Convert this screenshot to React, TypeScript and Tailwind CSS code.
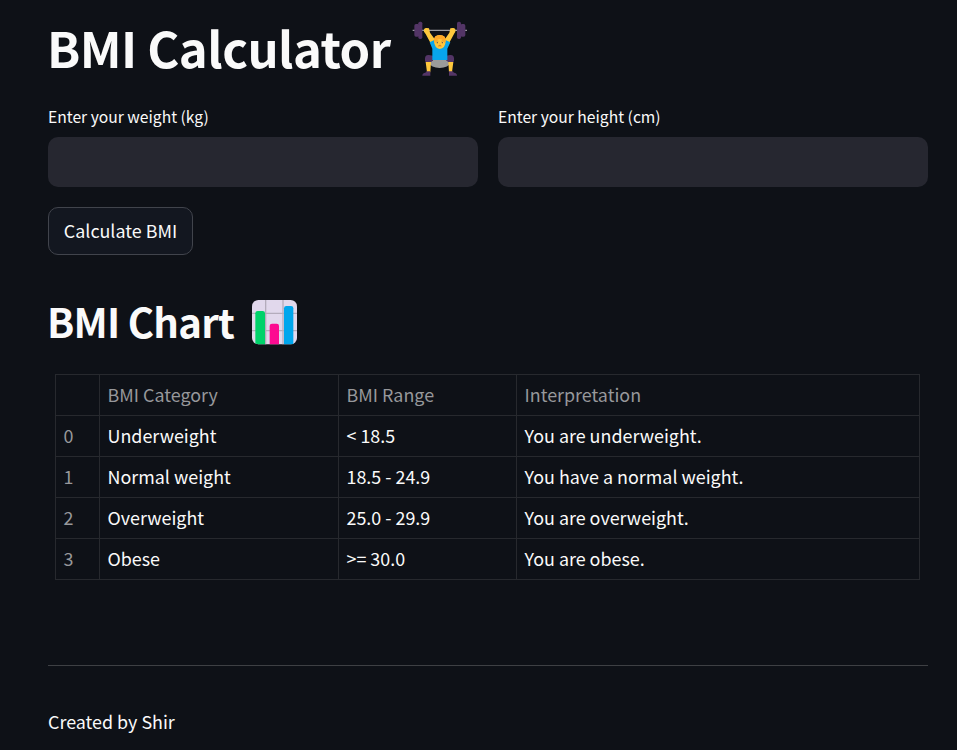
import type { ReactNode } from "react";

const rows = [
  ["Underweight", "< 18.5", "You are underweight."],
  ["Normal weight", "18.5 - 24.9", "You have a normal weight."],
  ["Overweight", "25.0 - 29.9", "You are overweight."],
  ["Obese", ">= 30.0", "You are obese."],
];

function WeightLifter() {
  return (
    <svg className="h-14 w-14 shrink-0" viewBox="36 33 168 168" aria-hidden="true">
      <path d="M38 61H201" stroke="#9b9b9f" strokeWidth="4" />
      <g fill="#533566">
        <rect x="55" y="35" width="12" height="52" rx="5" />
        <rect x="43" y="42" width="15" height="38" rx="5" />
        <rect x="171" y="35" width="12" height="52" rx="5" />
        <rect x="181" y="42" width="15" height="38" rx="5" />
      </g>
      <ellipse cx="119" cy="159" rx="30" ry="15" fill="#9b9b9b" />
      <path d="M75 151 Q73 134 87 135 L99 137 L99 151 L93 157 L77 157Z" fill="#533566" />
      <path d="M162 151 Q164 134 150 135 L139 137 L139 151 L145 157 L160 157Z" fill="#533566" />
      <path d="M77 156H93L91 187H81Z M145 156H160L156 187H147Z" fill="#ffc83d" />
      <path d="M80 184H91V197H67Q67 189 76 188Z M147 184H158L162 188Q171 189 171 197H147Z" fill="#533566" />
      <path d="M72 65 Q70 53 80 54 L87 55 L90 68 L106 90 L92 100 L77 72Z" fill="#ffc83d" />
      <path d="M166 65 Q168 53 158 54 L151 55 L148 68 L133 90 L147 100 L162 72Z" fill="#ffc83d" />
      <path d="M103 90 L89 97 L97 116 L97 150 H142 V116 L151 97 L136 90Z" fill="#08a5ec" />
      <path d="M102 94 Q101 75 119 75 Q138 75 137 94 Q136 116 119 117 Q104 116 102 94Z" fill="#ffc83d" />
      <path d="M102 94 Q101 75 119 75 Q138 75 137 94 L133 100 Q133 89 119 87 Q106 89 106 100Z" fill="#ffa928" />
      <path d="M108 94Q111 91 115 94M124 94Q128 91 131 94" fill="none" stroke="#d48728" strokeWidth="2" />
      <circle cx="112" cy="98" r="2" fill="#634c50" />
      <circle cx="127" cy="98" r="2" fill="#634c50" />
      <path d="M118 102H122" stroke="#f59b23" strokeWidth="2" />
      <path d="M115 108Q120 106 124 108" fill="none" stroke="#d67018" strokeWidth="3" />
    </svg>
  );
}

function BarChart() {
  return (
    <svg className="h-[45px] w-[45px] shrink-0" viewBox="0 0 135 135" aria-hidden="true">
      <clipPath id="tile">
        <rect width="135" height="133" rx="19" />
      </clipPath>
      <g clipPath="url(#tile)">
        <rect width="135" height="135" fill="#e1d8ec" />
        <path d="M0 40H135M0 92H135M41 0V135M93 0V135" stroke="#b4acbc" strokeWidth="4" />
        <path d="M10 135V40Q10 33 17 33H32Q39 33 39 40V135Z" fill="#00d26a" />
        <path d="M53 135V78Q53 71 60 71H74Q81 71 81 78V135Z" fill="#fc0b91" />
        <path d="M96 135V25Q96 18 103 18H117Q124 18 124 25V135Z" fill="#00a6ed" />
      </g>
    </svg>
  );
}

function Field({ label, id }: { label: string; id: string }) {
  return (
    <div className="flex flex-1 flex-col">
      <label htmlFor={id} className="h-[31px] text-[15.67px] leading-[22px]">
        <span>{label}</span>
      </label>
      <input id={id} className="h-[50px] w-full rounded-[10px] bg-[#262730] px-3 outline-none" />
    </div>
  );
}

function Cell({ children, muted }: { children?: ReactNode; muted?: boolean }) {
  return (
    <td className={`border border-[#27292e] p-0 pb-0.5 pl-[7.5px] ${muted ? "text-[#97989b]" : "text-[#fafafa]"}`}>
      {children}
    </td>
  );
}

export default function App() {
  return (
    <main className="h-[750px] w-full overflow-hidden bg-[#0e1117] pl-12 pr-[29px] pt-[14px] font-['Noto_Sans_CJK_SC','Source_Sans_Pro',sans-serif] text-[17.9px] text-[#fafafa]">
      <h1 className="flex h-[92px] items-start text-[49px] font-bold leading-[66px] tracking-[-0.55px]">
        <span className="-ml-px w-[365px] whitespace-nowrap">BMI Calculator</span>
        <span className="pt-[7px]"><WeightLifter /></span>
      </h1>
      <form className="flex flex-col items-start gap-5" onSubmit={(e) => e.preventDefault()}>
        <div className="flex w-full gap-5">
          <Field id="weight" label="Enter your weight (kg)" />
          <Field id="height" label="Enter your height (cm)" />
        </div>
        <button className="h-12 w-[145px] rounded-[10px] border border-[#41444c] bg-[#131720] pb-0.5 leading-[30px]">
          Calculate BMI
        </button>
      </form>
      <h2 className="mt-[41px] flex h-[78px] items-start text-[40.1px] font-bold leading-[49px] tracking-[-0.75px]">
        <span className="-ml-px w-[205px] whitespace-nowrap">BMI Chart</span>
        <span className="pt-1"><BarChart /></span>
      </h2>
      <table className="ml-[7px] w-[865px] table-fixed border-collapse text-left leading-[30px]">
        <colgroup>
          <col className="w-[44px]" />
          <col className="w-[239px]" />
          <col className="w-[178px]" />
          <col />
        </colgroup>
        <tbody>
          <tr className="h-[41px]">
            <Cell />
            <Cell muted>BMI Category</Cell>
            <Cell muted>BMI Range</Cell>
            <Cell muted>Interpretation</Cell>
          </tr>
          {rows.map(([category, range, text], i) => (
            <tr key={category} className="h-[41px]">
              <Cell muted>{i}</Cell>
              <Cell>{category}</Cell>
              <Cell>{range}</Cell>
              <Cell>{text}</Cell>
            </tr>
          ))}
        </tbody>
      </table>
      <hr className="mt-[85px] border-[#3e4044]" />
      <p className="mt-[39px] leading-[32px]">Created by Shir</p>
    </main>
  );
}
